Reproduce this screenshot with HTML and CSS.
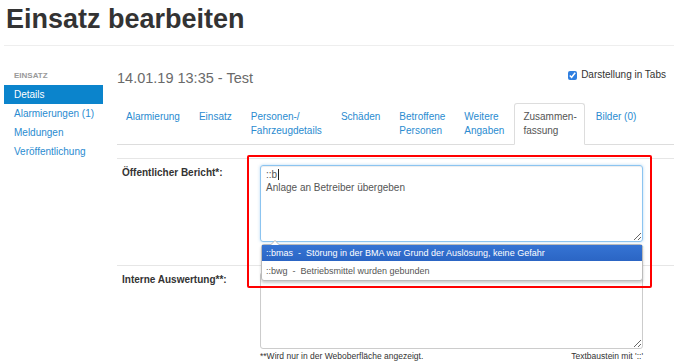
FILE: index.html
```html
<!DOCTYPE html>
<html lang="de">
<head>
    <meta charset="UTF-8">
    <meta name="viewport" content="width=device-width, initial-scale=1.0">
    <title>Einsatz bearbeiten</title>
    <link rel="stylesheet" href="styles.css">
</head>
<body>
    <div class="page-header">
        <h1>Einsatz bearbeiten</h1>
    </div>

    <div class="layout">
        <div class="sidebar">
            <div class="sidebar-title">EINSATZ</div>
            <a class="nav-item active" href="#">Details</a>
            <a class="nav-item" href="#">Alarmierungen (1)</a>
            <a class="nav-item" href="#">Meldungen</a>
            <a class="nav-item" href="#">Veröffentlichung</a>
        </div>

        <div class="main">
            <div class="main-head">
                <h2 class="subtitle">14.01.19 13:35 - Test</h2>
                <label class="tabs-toggle"><input type="checkbox" checked> Darstellung in Tabs</label>
            </div>

            <div class="tabs">
                <a class="tab" href="#">Alarmierung</a>
                <a class="tab" href="#">Einsatz</a>
                <a class="tab" href="#">Personen-/<br>Fahrzeugdetails</a>
                <a class="tab" href="#">Schäden</a>
                <a class="tab" href="#">Betroffene<br>Personen</a>
                <a class="tab" href="#">Weitere<br>Angaben</a>
                <a class="tab active" href="#">Zusammen-<br>fassung</a>
                <a class="tab" href="#">Bilder (0)</a>
            </div>

            <div class="form">
                <div class="form-row">
                    <div class="form-label">Öffentlicher Bericht*:</div>
                    <div class="form-field">
                        <div class="textbox focus">::b<span class="caret"></span><br>Anlage an Betreiber übergeben</div>
                        <div class="hint">
                            <span></span>
                            <span>Textbaustein mit '::'</span>
                        </div>
                        <!-- Vorschlagsliste für Textbausteine -->
                        <div class="suggest">
                            <div class="suggest-item selected"><span class="key">::bmas</span><span class="sep">-</span>Störung in der BMA war Grund der Auslösung, keine Gefahr</div>
                            <div class="suggest-item"><span class="key">::bwg</span><span class="sep">-</span>Betriebsmittel wurden gebunden</div>
                        </div>
                    </div>
                </div>
                <div class="form-row">
                    <div class="form-label">Interne Auswertung**:</div>
                    <div class="form-field">
                        <div class="textbox"></div>
                        <div class="hint">
                            <span>**Wird nur in der Weboberfläche angezeigt.</span>
                            <span>Textbaustein mit '::'</span>
                        </div>
                    </div>
                </div>
                <div class="highlight-box"></div>
            </div>
        </div>
    </div>
</body>
</html>
```

FILE: styles.css
```css
body {
    margin: 0;
    font-family: 'Liberation Sans', Arial, Helvetica, sans-serif;
    color: #333;
    background: #fff;
    overflow: hidden;
}

a {
    text-decoration: none;
}

.page-header {
    margin: 0 0 0 4px;
    padding: 3px 0 10px 2px;
    border-bottom: 1px solid #eee;
}

.page-header h1 {
    margin: 0;
    font-size: 27px;
    line-height: 32px;
    font-weight: bold;
    color: #333;
}

.layout {
    display: flex;
    padding-left: 4px;
}

.sidebar {
    width: 99px;
    flex-shrink: 0;
    padding-top: 25px;
    margin-right: 14px;
}

.sidebar-title {
    padding-left: 10px;
    font-size: 8px;
    line-height: 10px;
    font-weight: bold;
    color: #999;
    margin-bottom: 4px;
}

.nav-item {
    display: block;
    padding: 1px 4px 1px 10px;
    font-size: 10px;
    line-height: 17px;
    color: #2a8bd0;
    white-space: nowrap;
}

.nav-item.active {
    background: #0b84cc;
    color: #fff;
}

.main {
    flex: 1;
    min-width: 0;
    padding-top: 22px;
}

.main-head {
    display: flex;
    justify-content: space-between;
    align-items: flex-start;
    padding-right: 8px;
}

.subtitle {
    margin: 0;
    font-size: 14.5px;
    line-height: 20px;
    font-weight: normal;
    color: #6a6a6a;
}

.tabs-toggle {
    display: flex;
    align-items: center;
    gap: 4px;
    font-size: 10px;
    line-height: 14px;
    color: #333;
}

.tabs-toggle input {
    width: 9px;
    height: 9px;
    margin: 0;
    accent-color: #2f7fe0;
}

.tabs {
    display: flex;
    align-items: flex-start;
    margin-top: 15px;
    border-bottom: 1px solid #ddd;
}

.tab {
    display: block;
    padding: 6px 7px 6px 8px;
    margin-right: 2px;
    margin-bottom: -1px;
    font-size: 10px;
    line-height: 14px;
    color: #2a8bd0;
    border: 1px solid transparent;
    border-radius: 3px 3px 0 0;
}

.tab.active {
    color: #555;
    background: #fff;
    border-color: #ddd;
    border-bottom-color: #fff;
    height: 28px;
}

.form {
    position: relative;
    margin-top: 13px;
}

.form-row {
    display: flex;
    border-top: 1px solid #e6e6e6;
    padding-bottom: 10px;
}

.form-label {
    width: 138px;
    padding: 7px 0 0 5px;
    font-size: 10px;
    line-height: 14px;
    font-weight: bold;
    color: #333;
}

.form-field {
    position: relative;
    width: 383px;
    padding-top: 6px;
}

.textbox {
    box-sizing: border-box;
    height: 77px;
    padding: 2px 5px;
    border: 1px solid #ccc;
    border-radius: 3px;
    font-size: 10px;
    line-height: 13px;
    color: #555;
    overflow: auto;
    resize: vertical;
    box-shadow: inset 0 1px 1px rgba(0,0,0,0.075);
}

.textbox.focus {
    border-color: #8cc4f0;
    box-shadow: inset 0 1px 1px rgba(0,0,0,0.075), 0 0 3px rgba(102,175,233,0.5);
}

.caret {
    display: inline-block;
    width: 1px;
    height: 11px;
    background: #222;
    vertical-align: -2px;
    margin-left: 1px;
}

.hint {
    display: flex;
    justify-content: space-between;
    margin-top: 1px;
    font-size: 8.5px;
    line-height: 12px;
    color: #333;
}

.suggest {
    position: absolute;
    z-index: 5;
    left: 1px;
    right: 0;
    top: 85px;
    background: #fff;
    border: 1px solid #bbb;
    border-radius: 3px;
    box-shadow: 0 2px 3px rgba(0,0,0,0.2);
    font-size: 9px;
    line-height: 16px;
    color: #555;
}

/* kleine Spitze oben links */
.suggest::before {
    content: "";
    position: absolute;
    left: 8px;
    top: -5px;
    border-left: 5px solid transparent;
    border-right: 5px solid transparent;
    border-bottom: 5px solid #bbb;
}

.suggest::after {
    content: "";
    position: absolute;
    left: 9px;
    top: -4px;
    border-left: 4px solid transparent;
    border-right: 4px solid transparent;
    border-bottom: 4px solid #fff;
}

.suggest-item {
    padding: 0 4px;
    white-space: nowrap;
}

.suggest-item + .suggest-item {
    border-top: 1px solid #fff;
    line-height: 18px;
}

.suggest-item.selected {
    background: linear-gradient(#3574d4, #2b65c4);
    color: #fff;
}

.suggest-item .sep {
    margin: 0 5px;
}

.highlight-box {
    position: absolute;
    z-index: 6;
    left: 130px;
    top: -3px;
    width: 401px;
    height: 129px;
    border: 2px solid #f00;
    border-radius: 2px;
    pointer-events: none;
}
```
